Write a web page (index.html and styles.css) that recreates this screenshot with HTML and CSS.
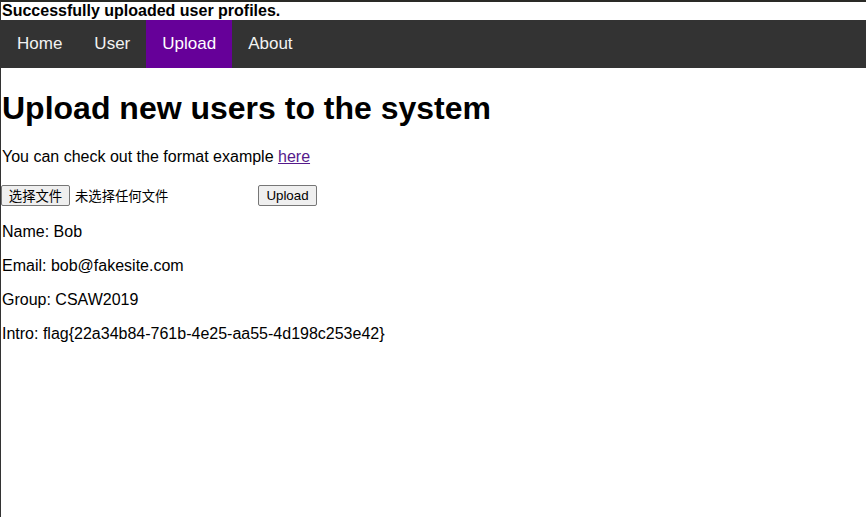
FILE: index.html
```html
<!DOCTYPE html>
<html>
<head>
<meta charset="utf-8">
<link rel="stylesheet" href="styles.css">
</head>
<body>
<div class="alert">Successfully uploaded user profiles.</div>
<nav class="topnav">
  <a href="#">Home</a>
  <a href="#">User</a>
  <a href="#" class="active">Upload</a>
  <a href="#">About</a>
</nav>
<main class="content">
  <h1>Upload new users to the system</h1>
  <p>You can check out the format example <a class="link" href="#">here</a></p>
  <form class="upload-form">
    <span class="file-input"><button type="button" class="btn file-btn">选择文件</button><span class="file-label">未选择任何文件</span></span>
    <button type="button" class="btn upload-btn">Upload</button>
  </form>
  <p>Name: Bob</p>
  <p>Email: bob@fakesite.com</p>
  <p>Group: CSAW2019</p>
  <p>Intro: flag{22a34b84-761b-4e25-aa55-4d198c253e42}</p>
</main>
</body>
</html>
```
FILE: styles.css
```css
html, body {
  margin: 0;
  padding: 0;
  background: #fff;
}
body {
  font-family: "Liberation Sans", Arial, sans-serif;
  font-size: 16px;
  color: #000;
  border-top: 2px solid #2a2a26;
  border-left: 1px solid #333;
  min-height: 100vh;
  box-sizing: border-box;
}
.alert {
  font-weight: bold;
  line-height: 18px;
  padding-left: 1px;
}
.topnav {
  display: flex;
  background: #333;
  height: 48px;
}
.topnav a {
  color: #f2f2f2;
  text-decoration: none;
  padding: 0 16px;
  line-height: 48px;
  font-size: 17px;
}
.topnav a.active {
  background: #660099;
  color: #fff;
}
.content {
  padding-left: 1px;
}
h1 {
  font-size: 32px;
  margin: 22px 0 21px;
  line-height: 37px;
}
p {
  margin: 16px 0;
  line-height: 18px;
}
.link {
  color: #551a8b;
}
.upload-form {
  display: flex;
  align-items: flex-start;
  height: 22px;
  padding-top: 3px;
}
.file-input {
  display: flex;
  align-items: center;
  width: 257px;
  margin-left: -1px;
}
.btn {
  font-family: "Liberation Sans", Arial, "Noto Sans CJK SC", sans-serif;
  font-size: 13.33px;
  background: #efefef;
  border: 1px solid #767676;
  border-radius: 2px;
  padding: 1px 6px;
  height: 21px;
  color: #000;
}
.upload-btn {
  width: 59px;
  padding: 1px 0;
}
.file-btn {
  font-family: "Noto Sans CJK SC", sans-serif;
  padding: 0;
  width: 69px;
  line-height: 17px;
}
.file-label {
  font-family: "Noto Sans CJK SC", sans-serif;
  font-size: 13.33px;
  margin-left: 5px;
}
```
